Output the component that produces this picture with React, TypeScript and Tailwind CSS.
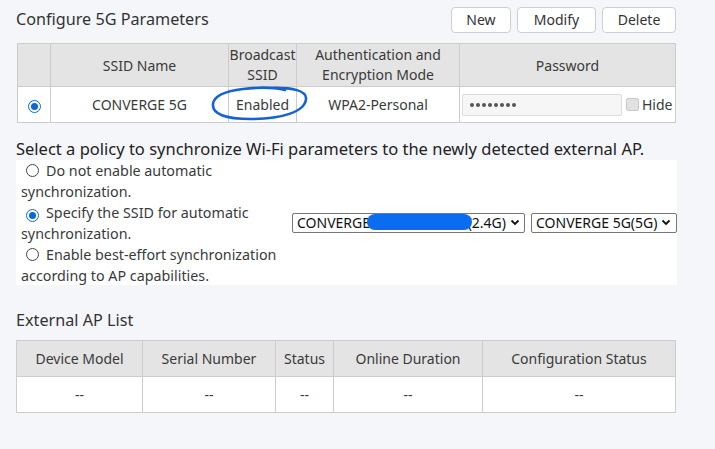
import React from "react"

const font = { fontFamily: '"Noto Sans", "Open Sans", sans-serif' }

function Chevron() {
  return (
    <svg width="10" height="7" viewBox="0 0 10 7" className="ml-1 shrink-0">
      <path d="M1.5 1.5 L5 5 L8.5 1.5" fill="none" stroke="#111" strokeWidth="1.8" />
    </svg>
  )
}

function Radio({ checked }: { checked?: boolean }) {
  return (
    <span
      className={
        "inline-flex h-[13px] w-[13px] items-center justify-center rounded-full border shrink-0 " +
        (checked ? "border-[#0b68d8] bg-white" : "border-[#444] bg-white")
      }
    >
      {checked && <span className="h-[7px] w-[7px] rounded-full bg-[#0b68d8]" />}
    </span>
  )
}

export default function App() {
  return (
    <div className="h-[449px] w-[715px] overflow-hidden bg-[#f5f6fa] text-[#3a3a3a]" style={font}>
      <div className="w-[676px] pl-[16px]">
        {/* header */}
        <div className="flex h-[38px] items-center pt-[1px]">
          <h1 className="text-[16.2px] text-[#333]">Configure 5G Parameters</h1>
          <div className="ml-auto flex gap-[6px]">
            <button className="h-[26px] w-[60px] rounded-[4px] border border-[#cfcfcf] bg-white text-[14px] text-[#333]">New</button>
            <button className="h-[26px] w-[79px] rounded-[4px] border border-[#cfcfcf] bg-white text-[14px] text-[#333]">Modify</button>
            <button className="h-[26px] w-[74px] rounded-[4px] border border-[#cfcfcf] bg-white text-[14px] text-[#333]">Delete</button>
          </div>
        </div>

        {/* ssid table */}
        <div className="relative mt-[5px] ml-[1px]">
          <table className="w-[659px] border-collapse text-[14px] text-[#3a3a3a]">
            <thead>
              <tr className="h-[43px] bg-[#e4e4e4]">
                <th className="w-[33px] border border-[#cccccc] font-normal"></th>
                <th className="w-[178px] border border-[#cccccc] font-normal">SSID Name</th>
                <th className="w-[68px] border border-[#cccccc] font-normal leading-[20px]">Broadcast<br />SSID</th>
                <th className="w-[163px] border border-[#cccccc] font-normal leading-[20px]">Authentication and<br />Encryption Mode</th>
                <th className="border border-[#cccccc] font-normal">Password</th>
              </tr>
            </thead>
            <tbody>
              <tr className="h-[36px] bg-white">
                <td className="border border-[#cccccc] text-center">
                  <span className="inline-flex align-middle"><Radio checked /></span>
                </td>
                <td className="border border-[#cccccc] text-center">CONVERGE 5G</td>
                <td className="border border-[#cccccc] text-center">Enabled</td>
                <td className="border border-[#cccccc] text-center">WPA2-Personal</td>
                <td className="border border-[#cccccc] pl-[2px]">
                  <div className="flex items-center">
                    <div className="flex h-[22px] w-[160px] items-center gap-[2px] rounded-[2px] border border-[#dddddd] bg-[#f6f6f6] px-[7px]">
                      {Array.from({ length: 8 }).map((_, i) => (
                        <span key={i} className="h-[4px] w-[4px] rounded-full bg-[#555]" />
                      ))}
                    </div>
                    <span className="ml-[4px] h-[13px] w-[13px] rounded-[2px] border border-[#c8c8c8] bg-[#e2e2e2]" />
                    <span className="ml-[3px] text-[14px]">Hide</span>
                  </div>
                </td>
              </tr>
            </tbody>
          </table>
          {/* hand-drawn annotation */}
          <svg className="absolute left-[192px] top-[40px]" width="104" height="44" viewBox="0 0 104 44">
            <path
              d="M60 5 C84 4 98 8 97 16 C96 29 72 36 42 36 C16 36 3 31 4 21 C5 12 17 8 34 6 C50 4 64 4 76 7"
              fill="none"
              stroke="#1463d6"
              strokeWidth="2.6"
              strokeLinecap="round"
            />
          </svg>
        </div>

        {/* policy */}
        <p className="mt-[15px] whitespace-nowrap text-[16.5px] leading-[22px] text-[#222]">
          Select a policy to synchronize Wi-Fi parameters to the newly detected external AP.
        </p>
        <div className="flex h-[125px] w-[661px] bg-white text-[14.3px] leading-[21px] text-[#3a3a3a]">
          <div className="w-[270px] pl-[5px]">
            <p>
              <span className="ml-[5px] mr-[7px] inline-flex align-[-1px]"><Radio /></span>Do not enable automatic synchronization.
            </p>
            <p>
              <span className="ml-[5px] mr-[7px] inline-flex align-[-1px]"><Radio checked /></span>Specify the SSID for automatic synchronization.
            </p>
            <p>
              <span className="ml-[5px] mr-[7px] inline-flex align-[-1px]"><Radio /></span>Enable best-effort synchronization according to AP capabilities.
            </p>
          </div>
          <div className="ml-[6px] flex items-center gap-[6px] self-center">
            <div className="relative flex h-[20px] w-[233px] items-center rounded-[2px] border border-[#777] bg-white px-[4px] text-[14px] text-[#111]">
              <span>CONVERGE</span>
              <span className="ml-auto">(2.4G)</span>
              <Chevron />
              <span className="absolute left-[74px] top-[0px] h-[16px] w-[105px] rounded-[8px] bg-[#0a6df0]" />
            </div>
            <div className="flex h-[20px] w-[146px] items-center rounded-[2px] border border-[#777] bg-white px-[4px] text-[14px] text-[#111]">
              <span>CONVERGE 5G(5G)</span>
              <Chevron />
            </div>
          </div>
        </div>

        {/* external ap list */}
        <h2 className="mt-[24px] text-[16.2px] leading-[22px] text-[#333]">External AP List</h2>
        <table className="mt-[9px] w-[660px] border-collapse text-[14px] text-[#3a3a3a]">
          <thead>
            <tr className="h-[36px] bg-[#e4e4e4]">
              <th className="w-[126px] border border-[#cccccc] font-normal">Device Model</th>
              <th className="w-[133px] border border-[#cccccc] font-normal">Serial Number</th>
              <th className="w-[58px] border border-[#cccccc] font-normal">Status</th>
              <th className="w-[149px] border border-[#cccccc] font-normal">Online Duration</th>
              <th className="border border-[#cccccc] font-normal">Configuration Status</th>
            </tr>
          </thead>
          <tbody>
            <tr className="h-[36px] bg-white text-center">
              <td className="border border-[#cccccc]">--</td>
              <td className="border border-[#cccccc]">--</td>
              <td className="border border-[#cccccc]">--</td>
              <td className="border border-[#cccccc]">--</td>
              <td className="border border-[#cccccc]">--</td>
            </tr>
          </tbody>
        </table>
      </div>
    </div>
  )
}
